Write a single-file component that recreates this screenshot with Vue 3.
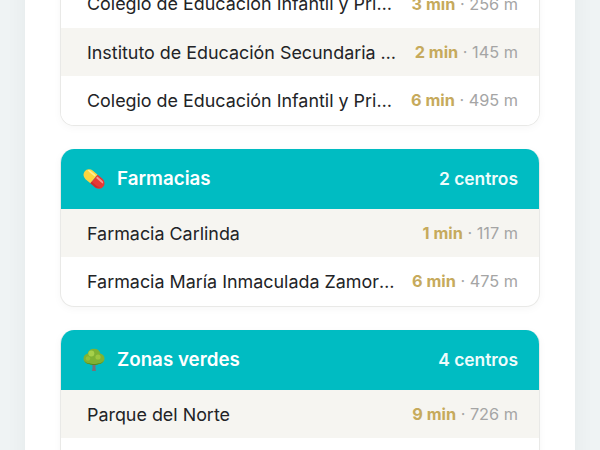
<script setup>
const first = [
  { name: 'Colegio de Educación Infantil y Primaria Alfonso', time: '3 min', dist: '256 m' },
  { name: 'Instituto de Educación Secundaria Obligatoria Norte', time: '2 min', dist: '145 m' },
  { name: 'Colegio de Educación Infantil y Primaria San José', time: '6 min', dist: '495 m' },
]
const pharm = [
  { name: 'Farmacia Carlinda', time: '1 min', dist: '117 m' },
  { name: 'Farmacia María Inmaculada Zamorano Ruiz', time: '6 min', dist: '475 m' },
]
const green = [
  { name: 'Parque del Norte', time: '9 min', dist: '726 m' },
]
</script>

<template>
  <div class="page">
    <main class="sheet">
      <section class="card first">
        <div v-for="r in first" :key="r.name" class="row">
          <span class="name">{{ r.name }}</span>
          <span class="meta"><b>{{ r.time }}</b> · {{ r.dist }}</span>
        </div>
      </section>

      <section class="card">
        <header class="head">
          <span class="title">
            <svg class="icon" viewBox="0 0 24 24" aria-hidden="true">
              <g transform="rotate(40 12 12)">
                <path d="M12 6.4H5.6a5.6 5.6 0 0 0 0 11.2H12z" fill="#fcd53f"/>
                <path d="M12 6.4h6.4a5.6 5.6 0 0 1 0 11.2H12z" fill="#e53935"/>
                <path d="M1.4 9.5a3 3 0 0 1 3-1.6H11v1.8H4.5z" fill="#fff3a6" opacity=".8"/>
                <path d="M13 8h6a3 3 0 0 1 3 1.8l-3 .2h-6z" fill="#f8a8a0" opacity=".85"/>
                <path d="M12 15.6h7a4 4 0 0 0 3-1.6 5.6 5.6 0 0 1-3.6 3.6H12z" fill="#bf2a2a" opacity=".7"/>
              </g>
            </svg>
            Farmacias
          </span>
          <span class="count">2 centros</span>
        </header>
        <div v-for="r in pharm" :key="r.name" class="row">
          <span class="name">{{ r.name }}</span>
          <span class="meta"><b>{{ r.time }}</b> · {{ r.dist }}</span>
        </div>
      </section>

      <section class="card last">
        <header class="head">
          <span class="title">
            <svg class="icon" viewBox="0 0 24 24" aria-hidden="true">
              <path d="M10 13h4l-.6 6.5.6 3.5h-4l.6-3.5z" fill="#7a6f78"/>
              <path d="M12 .8c3.4 0 5.8 2 6.3 4.6 2.4.6 4.2 2.6 4.2 5 0 3-2.6 5.6-5.8 5.6-1.7 1.3-7.7 1.3-9.4 0-3.2 0-5.8-2.6-5.8-5.6 0-2.4 1.8-4.4 4.2-5C6.2 2.8 8.6.8 12 .8z" fill="#7fb233"/>
              <path d="M2.2 12c1 2.4 3.2 3.4 5.3 3.2 1.6 1 7.4 1 9 0 2.1.2 4.3-.8 5.3-3.2-.6 2.400-2.800 4-5.100 4-1.700 1.300-7.700 1.300-9.400 0-2.300 0-4.500-1.600-5.100-4z" fill="#4f8a24"/>
              <circle cx="9.300" cy="5.600" r="3" fill="#a6d04a"/>
              <circle cx="16" cy="9" r="2.600" fill="#9cc640"/>
              <circle cx="6" cy="10.500" r="2.200" fill="#93bf3c"/>
            </svg>
            Zonas verdes
          </span>
          <span class="count">4 centros</span>
        </header>
        <div v-for="r in green" :key="r.name" class="row">
          <span class="name">{{ r.name }}</span>
          <span class="meta"><b>{{ r.time }}</b> · {{ r.dist }}</span>
        </div>
      </section>
    </main>
  </div>
</template>

<style>
html, body { margin: 0; background: #eff3f4; }
</style>

<style scoped>
.page {
  height: 450px;
  overflow: hidden;
  background: #eff3f4;
  font-family: Inter, "Liberation Sans", sans-serif;
  color: #222326;
}
.sheet {
  width: 550px;
  margin: -20.3px auto 0;
  padding: 0 35px;
  box-sizing: border-box;
  background: #fff;
  box-shadow: 0 0 20px rgba(30, 50, 60, .05);
  display: flex;
  flex-direction: column;
  gap: 23.4px;
}
.card {
  border: 1px solid #e9e9e7;
  border-top: 0;
  border-radius: 14px;
  overflow: hidden;
  background: #fff;
  box-shadow: 0 2px 8px rgba(0, 0, 0, .035);
}
.first { border-top-left-radius: 0; border-top-right-radius: 0; }
.last { padding-bottom: 60px; }
.head {
  height: 60px;
  margin: 0 -1px;
  padding: 0 22px;
  display: flex;
  align-items: center;
  justify-content: space-between;
  background: #00bcc2;
  color: #fff;
  font-weight: 600;
}
.title {
  display: flex;
  align-items: center;
  gap: 11px;
  font-size: 18.75px;
}
.icon { width: 24px; height: 24px; flex: none; }
.count { font-size: 17.4px; color: #effcfc; }
.row {
  height: 48.3px;
  padding: 0 21px 0 26px;
  display: flex;
  align-items: center;
  gap: 16px;
  font-size: 17.9px;
}
.row:nth-of-type(odd) { background: #f6f5f1; }
.first .row:nth-of-type(odd) { background: #fff; }
.first .row:nth-of-type(even) { background: #f6f5f1; }
.name {
  flex: 1;
  min-width: 0;
  white-space: nowrap;
  overflow: hidden;
  text-overflow: ellipsis;
}
.meta {
  flex: none;
  font-size: 16.3px;
  color: #a5a5a5;
}
.meta b { font-weight: 700; color: #c6aa5c; }
</style>
